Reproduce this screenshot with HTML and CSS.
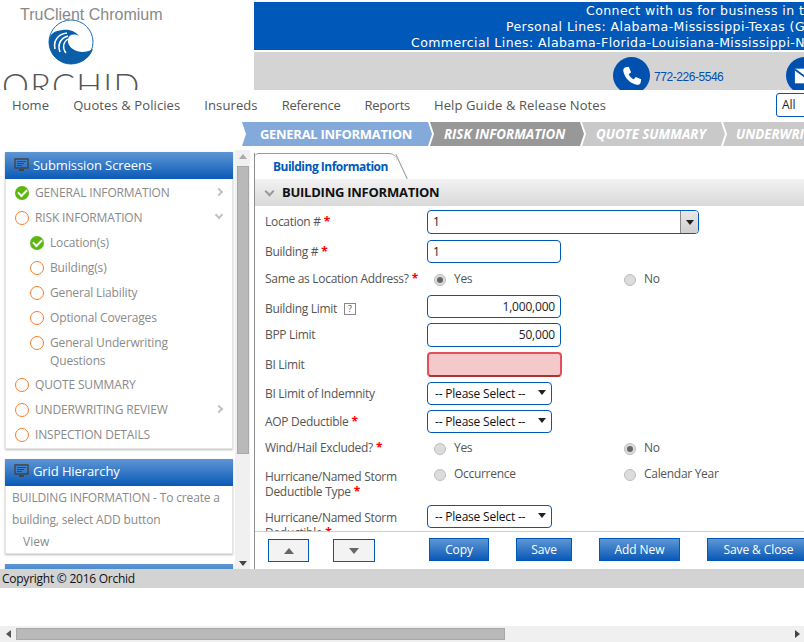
FILE: index.html
```html
<!DOCTYPE html>
<html lang="en">
<head>
<meta charset="utf-8">
<title>Building Information</title>
<link rel="stylesheet" href="styles.css">
</head>
<body>
<div class="page">
  <header class="header">
    <div class="logo">
      <div class="client">TruClient Chromium</div>
      <svg class="wave" width="46" height="46" viewBox="0 0 46 46">
        <circle cx="23" cy="23" r="22" fill="none" stroke="#1a6fb8" stroke-width="1"/>
        <path d="M1 21C3 12 9 12 15 11C22 10 28 13 31 17C25 14 21 16 20 20C19 26 24 32 34 33C38 33 42 32 45 30C42 39 33 45 23 45C10 45 0 34 1 21Z" fill="#0a5fa8"/>
        <path d="M7 30C5 22 10 15 19 14" fill="none" stroke="#fff" stroke-width="1.6"/>
        <path d="M12 33C9 25 13 19 20 17" fill="none" stroke="#fff" stroke-width="1.6"/>
        <path d="M18 34C14 29 15 23 20 20" fill="none" stroke="#fff" stroke-width="1.4"/>
      </svg>
      <div class="brand">ORCHID</div>
    </div>
    <div class="banner">
      <div class="connect">
        <div class="line l1">Connect with us for business in the following states</div>
        <div class="line l2">Personal Lines: Alabama-Mississippi-Texas (Gulf Coast)</div>
        <div class="line l3">Commercial Lines: Alabama-Florida-Louisiana-Mississippi-New Jersey</div>
      </div>
      <div class="contact">
        <span class="round">
          <svg width="22" height="22" viewBox="0 0 24 24"><path d="M5 2.5L8.5 2L11 8L8.5 10C9.5 12.5 11.5 14.5 14 15.5L16 13L22 15.5L21.5 19C21 21 19 22 17 21.5C10 20 4 14 2.6 7C2.2 5 3 3 5 2.5Z" fill="#fff"/></svg>
        </span>
        <span class="phone">772-226-5546</span>
        <span class="round mail">
          <svg width="22" height="22" viewBox="0 0 24 24"><rect x="1" y="4" width="22" height="16" fill="#fff"/><path d="M1 5L12 13L23 5" fill="none" stroke="#0050b0" stroke-width="2"/></svg>
        </span>
      </div>
    </div>
  </header>

  <nav class="nav">
    <a class="nav-item">Home</a>
    <a class="nav-item">Quotes &amp; Policies</a>
    <a class="nav-item">Insureds</a>
    <a class="nav-item nav-tight">Reference</a>
    <a class="nav-item nav-tight">Reports</a>
    <a class="nav-item">Help Guide &amp; Release Notes</a>
    <div class="nav-select">All</div>
  </nav>

  <div class="steps">
    <div class="step step-first">GENERAL INFORMATION</div>
    <div class="step step-risk">RISK INFORMATION</div>
    <div class="step step-quote">QUOTE SUMMARY</div>
    <div class="step step-under">UNDERWRITING REVIEW</div>
  </div>

  <div class="work">
    <aside class="side">
      <div class="side-scroll">
        <section class="panel">
          <h2 class="panel-head">
            <svg class="monitor" width="15" height="14" viewBox="0 0 15 14"><path d="M1 1H14V10H1Z" fill="none" stroke="#444" stroke-width="1.4"/><path d="M3 3.5H12M3 5.5H10M3 7.5H8" stroke="#444"/><path d="M5 11H10V13H5Z" fill="#444"/></svg>
            Submission Screens
          </h2>
          <ul class="tree">
            <li class="node"><i class="ok"></i><span class="node-text">GENERAL INFORMATION</span><b class="chev"></b></li>
            <li class="node"><i class="todo"></i><span class="node-text">RISK INFORMATION</span><b class="chev down"></b></li>
            <li class="node sub"><i class="ok"></i><span class="node-text">Location(s)</span></li>
            <li class="node sub"><i class="todo"></i><span class="node-text">Building(s)</span></li>
            <li class="node sub"><i class="todo"></i><span class="node-text">General Liability</span></li>
            <li class="node sub"><i class="todo"></i><span class="node-text">Optional Coverages</span></li>
            <li class="node sub tall"><i class="todo"></i><span class="node-text">General Underwriting Questions</span></li>
            <li class="node"><i class="todo"></i><span class="node-text">QUOTE SUMMARY</span></li>
            <li class="node"><i class="todo"></i><span class="node-text">UNDERWRITING REVIEW</span><b class="chev"></b></li>
            <li class="node"><i class="todo"></i><span class="node-text">INSPECTION DETAILS</span></li>
          </ul>
        </section>
        <section class="panel">
          <h2 class="panel-head panel-head-low">
            <svg class="monitor" width="15" height="14" viewBox="0 0 15 14"><path d="M1 1H14V10H1Z" fill="none" stroke="#444" stroke-width="1.4"/><path d="M3 3.5H12M3 5.5H10M3 7.5H8" stroke="#444"/><path d="M5 11H10V13H5Z" fill="#444"/></svg>
            Grid Hierarchy
          </h2>
          <div class="grid-body">
            <p class="grid-text">BUILDING INFORMATION - To create a building, select ADD button</p>
            <p class="grid-view">View</p>
          </div>
        </section>
        <section class="panel"><h2 class="panel-head"></h2></section>
      </div>
      <div class="vbar">
        <span class="arrow-up"></span>
        <span class="vthumb"></span>
        <span class="arrow-down"></span>
      </div>
    </aside>

    <main class="main">
      <div class="tabs"><div class="tab">Building Information</div></div>
      <div class="section-head"><span class="section-chev"></span>BUILDING INFORMATION</div>
      <div class="form">
        <div class="row h-loc"><label class="lab">Location #<em>*</em></label>
          <div class="input combo">1<span class="combo-btn"><span class="tri"></span></span></div></div>
        <div class="row h-bld"><label class="lab">Building #<em>*</em></label><div class="input short">1</div></div>
        <div class="row h-radio"><label class="lab">Same as Location Address?<em>*</em></label>
          <div class="radios"><span class="opt"><i class="radio on"></i>Yes</span><span class="opt"><i class="radio"></i>No</span></div></div>
        <div class="row h-lim"><label class="lab lab-low">Building Limit <span class="help">?</span></label><div class="input short num">1,000,000</div></div>
        <div class="row h-bpp"><label class="lab">BPP Limit</label><div class="input short num">50,000</div></div>
        <div class="row h-bi"><label class="lab">BI Limit</label><div class="input short bad"></div></div>
        <div class="row h-sel"><label class="lab">BI Limit of Indemnity</label><div class="input sel">-- Please Select --<span class="tri"></span></div></div>
        <div class="row h-sel"><label class="lab">AOP Deductible<em>*</em></label><div class="input sel">-- Please Select --<span class="tri"></span></div></div>
        <div class="row h-wind"><label class="lab">Wind/Hail Excluded?<em>*</em></label>
          <div class="radios"><span class="opt"><i class="radio"></i>Yes</span><span class="opt"><i class="radio on"></i>No</span></div></div>
        <div class="row h-type top"><label class="lab lab-two">Hurricane/Named Storm Deductible Type<em>*</em></label>
          <div class="radios"><span class="opt"><i class="radio"></i>Occurrence</span><span class="opt"><i class="radio"></i>Calendar Year</span></div></div>
        <div class="row top"><label class="lab lab-five">Hurricane/Named Storm Deductible<em>*</em></label><div class="input sel">-- Please Select --<span class="tri"></span></div></div>
      </div>
      <div class="actions">
        <button class="nudge"><span class="tri-up"></span></button>
        <button class="nudge second"><span class="tri-down"></span></button>
        <button class="btn copy">Copy</button>
        <button class="btn save">Save</button>
        <button class="btn add">Add New</button>
        <button class="btn close">Save &amp; Close</button>
      </div>
    </main>
  </div>

  <footer class="copyright">Copyright © 2016 Orchid</footer>
  <div class="blank"></div>
  <div class="hbar"><span class="arrow-left"></span><span class="hthumb"></span><span class="arrow-right"></span></div>
</div>
</body>
</html>
```
FILE: styles.css
```css
* { box-sizing: border-box; }
html, body { margin: 0; padding: 0; }
body { width: 804px; height: 642px; overflow: hidden; background: #fff; font-family: "Open Sans", "Liberation Sans", sans-serif; font-size: 12px; color: #555; }
.page { width: 804px; height: 642px; display: flex; flex-direction: column; overflow: hidden; }

.header { height: 90px; flex: none; display: flex; overflow: hidden; }
.logo { width: 254px; flex: none; height: 90px; position: relative; overflow: hidden; }
.client { font-family: "Liberation Sans", sans-serif; font-size: 16px; line-height: 18px; color: #888; padding: 6px 0 0 20px; position: relative; z-index: 1; }
.wave { position: absolute; left: 48px; top: 19px; }
.brand { position: absolute; left: 2px; top: 65px; font-family: Lato, sans-serif; font-weight: 300; font-size: 34px; line-height: 40px; letter-spacing: 1.3px; color: #555; white-space: nowrap; }

.banner { flex: 1; min-width: 0; padding-top: 2px; display: flex; flex-direction: column; gap: 2px; overflow: hidden; }
.connect { height: 48px; background: #0059b9; color: #fff; font-family: "DejaVu Sans", sans-serif; font-size: 12.5px; letter-spacing: .42px; line-height: 16px; padding-top: 1px; overflow: hidden; }
.line { white-space: nowrap; }
.l1 { padding-left: 332px; }
.l2 { padding-left: 252px; }
.l3 { padding-left: 157px; }
.contact { flex: 1; background: #d4d4d4; display: flex; align-items: flex-start; padding: 5px 0 0 359px; overflow: hidden; }
.round { width: 37px; height: 37px; flex: none; border-radius: 50%; background: #0050b0; display: flex; align-items: center; justify-content: center; }
.phone { font-size: 12px; color: #0050b0; font-family: "Liberation Sans", sans-serif; margin: 12px 0 0 4px; line-height: 16px; width: 132px; flex: none; letter-spacing: -.45px; }
.mail { margin-left: 0; }

.nav { height: 30px; flex: none; display: flex; align-items: center; padding-left: 12px; gap: 24px; font-size: 13px; letter-spacing: .1px; color: #555; }
.nav-item { white-space: nowrap; }
.nav-tight { letter-spacing: -.25px; }
.nav-select { margin-left: auto; margin-right: -6px; width: 34px; height: 24px; border: 1px solid #0059b9; border-radius: 3px; color: #222; padding: 3px 0 0 5px; font-size: 12px; line-height: 16px; background: #fff; letter-spacing: 0; }

.steps { height: 24px; margin: 2px 0 0 242px; flex: none; display: flex; overflow: hidden; width: 562px; }
.step { height: 24px; flex: none; color: #fff; font-weight: 700; font-size: 13.3px; line-height: 24px; white-space: nowrap; margin-right: -2px; clip-path: polygon(0 0, calc(100% - 4px) 0, 100% 50%, calc(100% - 4px) 100%, 0 100%, 4px 50%); }
.step-first { width: 190px; background: #84aadb; font-size: 13px; letter-spacing: -.3px; padding-left: 18px; }
.step-risk { width: 154px; background: #989898; font-style: italic; padding-left: 14px; }
.step-quote { width: 143px; background: #c9c9c9; font-style: italic; padding-left: 14px; }
.step-under { width: 200px; background: #c9c9c9; font-style: italic; padding-left: 13px; }

.work { height: 419px; flex: none; display: flex; margin-top: 4px; overflow: hidden; }
.side { width: 254px; height: 419px; flex: none; display: flex; overflow: hidden; }
.side-scroll { width: 235px; flex: none; padding: 2px 2px 0 5px; display: flex; flex-direction: column; gap: 10px; overflow: hidden; }
.panel { background: #fff; box-shadow: 0 1px 2px #bbb; flex: none; }
.panel-head { margin: 0; height: 27px; display: flex; align-items: center; gap: 4px; padding: 0 0 2px 9px; background: linear-gradient(#5e96d4, #0a5ab7); color: #fff; font-weight: 400; font-size: 13px; letter-spacing: -.1px; white-space: nowrap; }
.panel-head-low { padding-bottom: 4px; }
.monitor { flex: none; }
.tree { list-style: none; margin: 0; padding: 1px 0 1px; border: 1px solid #e4e4e4; border-top: 0; }
.node { height: 25px; display: flex; align-items: center; padding-left: 9px; color: #8a8a8a; font-size: 12px; white-space: nowrap; position: relative; letter-spacing: -.15px; }
.node-text { margin-left: 6px; line-height: 18px; white-space: normal; }
.node .ok, .node .todo { width: 14px; height: 14px; border-radius: 50%; flex: none; position: relative; }
.ok { background: #5cb80e; }
.ok::after { content: ""; position: absolute; left: 3px; top: 3px; width: 7px; height: 4px; border-left: 2px solid #fff; border-bottom: 2px solid #fff; transform: rotate(-45deg); }
.node .todo { border: 1.5px solid #f57d2a; }
.sub { padding-left: 24px; }
.tall { height: 42px; align-items: flex-start; padding-top: 4px; }
.tall .node-text { width: 130px; }
.tall i { margin-top: 2px; }
.chev { position: absolute; right: 10px; top: 9px; width: 6px; height: 6px; border-top: 2px solid #c2c2c2; border-right: 2px solid #c2c2c2; transform: rotate(45deg); }
.chev.down { transform: rotate(135deg); top: 7px; }
.grid-body { border: 1px solid #e4e4e4; border-top: 0; padding: 1px 2px 0 6px; height: 68px; }
.grid-text { margin: 0; line-height: 22px; color: #8a8a8a; letter-spacing: -.15px; }
.grid-view { margin: 0 0 0 11px; line-height: 22px; color: #8a8a8a; }

.vbar { width: 15px; flex: none; background: #f0f0f0; height: 419px; display: flex; flex-direction: column; align-items: center; padding-top: 4px; }
.arrow-up { width: 0; height: 0; border: 4px solid transparent; border-top: 0; border-bottom: 5px solid #aaa; flex: none; }
.arrow-down { width: 0; height: 0; border: 4px solid transparent; border-bottom: 0; border-top: 5px solid #444; margin-top: auto; margin-bottom: 3px; flex: none; }
.vthumb { width: 12px; height: 288px; margin-top: 7px; background: #b9b9b9; border: 1px solid #a8a8a8; flex: none; }

.main { flex: 1; min-width: 0; height: 416px; border-left: 1px solid #8e8e8e; margin-top: 3px; display: flex; flex-direction: column; overflow: hidden; }
.tabs { height: 26px; flex: none; position: relative; }
.tab { width: 142px; height: 26px; border-top: 1px solid #999; border-radius: 4px 8px 0 0; color: #0059b9; font-weight: 700; font-size: 12px; letter-spacing: -.5px; line-height: 25px; padding-left: 18px; white-space: nowrap; position: relative; }
.tab::after { content: ""; position: absolute; left: 146px; top: -1px; width: 1px; height: 27px; background: #999; transform: rotate(-25deg); }
.section-head { height: 27px; flex: none; background: linear-gradient(#f2f2f2, #d9d9d9); color: #111; font-weight: 700; font-size: 13px; letter-spacing: -.25px; line-height: 27px; white-space: nowrap; padding-left: 10px; display: flex; }
.section-chev { width: 7px; height: 7px; border-right: 2px solid #999; border-bottom: 2px solid #999; transform: rotate(45deg); margin: 9px 9px 0 1px; flex: none; }

.form { height: 325px; flex: none; padding: 4px 0 0 10px; overflow: hidden; }
.row { display: flex; align-items: center; width: 560px; }
.top { align-items: flex-start; }
.lab { width: 162px; flex: none; font-size: 12px; line-height: 15px; color: #555; letter-spacing: -.3px; padding-bottom: 1px; }
.lab em { color: #f00; font-style: normal; font-weight: 700; margin-left: 3px; }
.lab-low { padding: 3px 0 0; }
.lab-two { padding: 2px 0 0; }
.lab-five { padding: 5px 0 0; }
.h-loc { height: 24px; margin-bottom: 6px; }
.h-bld { height: 23px; margin-bottom: 8px; }
.h-radio { height: 16px; margin-bottom: 8px; }
.h-lim { height: 23px; margin-bottom: 5px; }
.h-bpp { height: 24px; margin-bottom: 5px; }
.h-bi { height: 25px; margin-bottom: 5px; }
.h-sel { height: 23px; margin-bottom: 5px; }
.h-wind { height: 16px; margin: 7px 0 11px; }
.h-type { height: 30px; margin-bottom: 8px; }

.input { height: 100%; border: 1px solid #0059b9; border-radius: 4px; background: #fff; color: #222; line-height: 21px; padding: 0 5px; position: relative; white-space: nowrap; letter-spacing: -.2px; }
.top .input { height: 23px; }
.combo { width: 272px; display: flex; padding-right: 0; }
.combo-btn { position: absolute; right: 0; top: 0; bottom: 0; width: 18px; background: linear-gradient(#e8e8e8, #cfcfcf); border-left: 1px solid #888; border-radius: 0 3px 3px 0; display: flex; align-items: center; justify-content: center; }
.short { width: 134px; }
.num { text-align: right; }
.bad { background: #f5c9c9; border: 2px solid #e4505a; border-bottom-color: #a33; width: 135px; }
.sel { width: 125px; padding-left: 7px; color: #111; }
.tri { width: 0; height: 0; border: 4px solid transparent; border-bottom: 0; border-top: 5px solid #222; }
.sel .tri { position: absolute; right: 5px; top: 7px; }
.help { display: inline-block; width: 12px; height: 12px; border: 1px solid #888; font-size: 9px; line-height: 10px; text-align: center; margin-left: 4px; vertical-align: 1px; letter-spacing: 0; }
.radios { display: flex; padding-left: 7px; width: 400px; }
.opt { width: 190px; flex: none; display: flex; align-items: center; gap: 8px; line-height: 14px; letter-spacing: -.3px; }
.radio { width: 12px; height: 12px; border-radius: 50%; flex: none; background: #dcdcdc; border: 1px solid #bdbdbd; position: relative; top: 1px; }
.radio.on::after { content: ""; position: absolute; left: 2px; top: 2px; width: 6px; height: 6px; border-radius: 50%; background: #666; }

.actions { height: 38px; flex: none; border-top: 1px solid #ccc; display: flex; align-items: flex-start; padding: 6px 0 0 13px; width: 570px; }
.nudge { width: 41px; height: 23px; border: 1px solid #0059b9; background: #f3f3f3; padding: 0; margin-top: 1px; display: flex; align-items: center; justify-content: center; flex: none; }
.second { width: 42px; margin-left: 24px; }
.tri-up { width: 0; height: 0; border: 5px solid transparent; border-top: 0; border-bottom: 6px solid #666; }
.tri-down { width: 0; height: 0; border: 5px solid transparent; border-bottom: 0; border-top: 6px solid #666; }
.btn { height: 23px; flex: none; border: 1px solid #0059b9; background: linear-gradient(#5e96d4, #0a5ab7); color: #fff; font-family: "Open Sans", sans-serif; font-size: 12px; line-height: 20px; padding: 0; white-space: nowrap; letter-spacing: -.1px; }
.copy { width: 60px; margin-left: 54px; }
.save { width: 56px; margin-left: 27px; }
.add { width: 81px; margin-left: 27px; }
.close { width: 103px; margin-left: 27px; }

.copyright { height: 19px; flex: none; background: #d3d3d3; color: #111; font-size: 12px; letter-spacing: -.25px; line-height: 19px; padding-left: 2px; }
.blank { flex: 1; }
.hbar { height: 16px; flex: none; background: #f0f0f0; display: flex; align-items: center; padding-left: 6px; }
.arrow-left { width: 0; height: 0; border: 4px solid transparent; border-left: 0; border-right: 5px solid #555; }
.hthumb { width: 489px; height: 12px; margin-left: 5px; background: #b9b9b9; border: 1px solid #a8a8a8; }
.arrow-right { width: 0; height: 0; border: 4px solid transparent; border-right: 0; border-left: 5px solid #444; margin-left: auto; margin-right: 4px; }
```
